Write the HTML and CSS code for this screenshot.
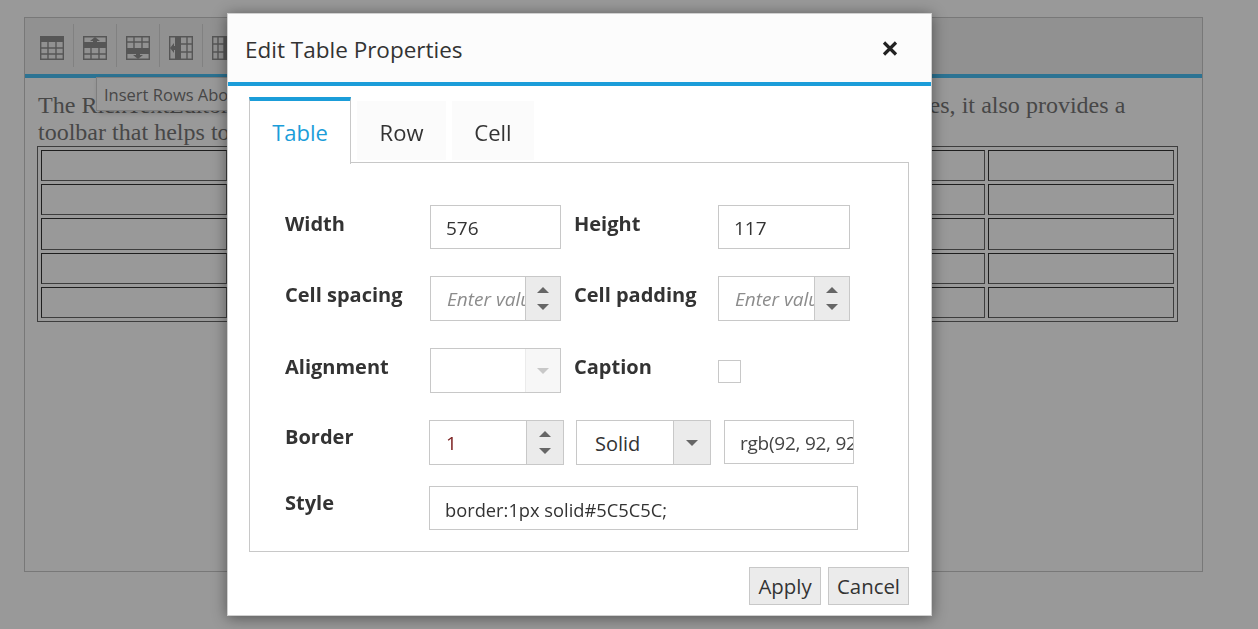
FILE: index.html
```html
<!doctype html>
<html lang="en">
  <head>
    <meta charset="UTF-8" />
    <meta name="viewport" content="width=device-width, initial-scale=1.0" />
    <title>Edit Table Properties</title>
    <link rel="stylesheet" href="styles.css">
  </head>
  <body>
    <div class="editor">
      <div class="toolbar">
        <div class="tool">
          <svg class="icon" viewBox="0 0 24 24"><path d="M.7.7h22.600v22.600H.7zM8 6v18M16 6v18M0 12h24M0 18h24" fill="none" stroke="currentColor" stroke-width="1.400"/><rect width="24" height="6" fill="currentColor"/></svg>
        </div>
        <div class="tool">
          <svg class="icon" viewBox="0 0 24 24"><path d="M.7.7h22.600v22.600H.7zM8 12v12M16 12v12M0 18h24" fill="none" stroke="currentColor" stroke-width="1.400"/><rect y="6" width="24" height="6" fill="currentColor"/><path d="M12 1l5 4h-3v2h-4V5H7z" fill="currentColor"/></svg>
        </div>
        <div class="tool">
          <svg class="icon" viewBox="0 0 24 24"><path d="M.7.7h22.600v22.600H.7zM8 0v12M16 0v12M0 6h24" fill="none" stroke="currentColor" stroke-width="1.400"/><rect y="12" width="24" height="6" fill="currentColor"/><path d="M12 23l5-4h-3v-2h-4v2H7z" fill="currentColor"/></svg>
        </div>
        <div class="tool">
          <svg class="icon" viewBox="0 0 24 24"><path d="M.7.7h22.600v22.600H.7zM18 0v24M12 8h12M12 16h12" fill="none" stroke="currentColor" stroke-width="1.400"/><rect x="6" width="6" height="24" fill="currentColor"/><path d="M1 12l4-5v3h3v4H5v3z" fill="currentColor"/></svg>
        </div>
        <div class="tool">
          <svg class="icon" viewBox="0 0 24 24"><path d="M.7.7h22.600v22.600H.7zM6 0v24M12 0v24M0 8h12M0 16h12" fill="none" stroke="currentColor" stroke-width="1.400"/><rect x="12" width="6" height="24" fill="currentColor"/></svg>
        </div>
      </div>
      <div class="tooltip">Insert Rows Above</div>
      <div class="content">
        <p class="intro">The RichTextEditor control is a WYSIWYG editor for entering content with tables and images, it also provides a toolbar that helps to apply rich formats to the content entered in the editor.</p>
        <table class="grid-table" border="1">
          <tr><td></td><td></td><td></td><td></td><td></td><td></td></tr>
          <tr><td></td><td></td><td></td><td></td><td></td><td></td></tr>
          <tr><td></td><td></td><td></td><td></td><td></td><td></td></tr>
          <tr><td></td><td></td><td></td><td></td><td></td><td></td></tr>
          <tr><td></td><td></td><td></td><td></td><td></td><td></td></tr>
        </table>
      </div>
    </div>

    <div class="overlay"></div>

    <div class="dialog">
      <div class="dialog-head">
        <h1 class="dialog-title">Edit Table Properties</h1>
        <svg class="close" viewBox="0 0 16 15"><path d="M2 1.500l12 12M14 1.500l-12 12" fill="none" stroke="currentColor" stroke-width="3.200"/></svg>
      </div>
      <div class="dialog-body">
        <div class="tabs">
          <div class="tab tab-active">Table</div>
          <div class="tab tab-row">Row</div>
          <div class="tab tab-cell">Cell</div>
        </div>
        <div class="panel">
          <div class="props">
            <label class="prop-label">Width</label>
            <input class="field" type="text" value="576" />
            <label class="prop-label prop-label-second">Height</label>
            <input class="field" type="text" value="117" />

            <label class="prop-label">Cell spacing</label>
            <div class="field combo">
              <input class="combo-input" type="text" placeholder="Enter value" />
              <div class="spin"><span class="arrow-up"></span><span class="arrow-down"></span></div>
            </div>
            <label class="prop-label prop-label-second">Cell padding</label>
            <div class="field combo">
              <input class="combo-input" type="text" placeholder="Enter value" />
              <div class="spin"><span class="arrow-up"></span><span class="arrow-down"></span></div>
            </div>

            <label class="prop-label">Alignment</label>
            <div class="field combo">
              <span class="combo-text"></span>
              <div class="spin spin-off"><span class="arrow-down"></span></div>
            </div>
            <label class="prop-label prop-label-second">Caption</label>
            <div class="caption-cell"><input class="check" type="checkbox" /></div>
          </div>

          <div class="border-row">
            <label class="prop-label">Border</label>
            <div class="field combo border-width">
              <input class="combo-input" type="text" value="1" />
              <div class="spin"><span class="arrow-up"></span><span class="arrow-down"></span></div>
            </div>
            <div class="field combo border-style">
              <span class="combo-text">Solid</span>
              <div class="spin"><span class="arrow-down"></span></div>
            </div>
            <input class="field border-color" type="text" value="rgb(92, 92, 92)" />
          </div>

          <div class="style-row">
            <label class="prop-label">Style</label>
            <input class="field style-input" type="text" value="border:1px solid#5C5C5C;" />
          </div>
        </div>
        <div class="dialog-foot">
          <button class="btn btn-apply" type="button">Apply</button>
          <button class="btn btn-cancel" type="button">Cancel</button>
        </div>
      </div>
    </div>
  </body>
</html>
```

FILE: styles.css
```css
html,
body {
  height: 100%;
}
body {
  margin: 0;
  padding: 17px 55px 0 24px;
  box-sizing: border-box;
  overflow: hidden;
  background: #fff;
  font-family: "Open Sans", "Noto Sans", sans-serif;
  color: #333;
}

/* editor behind the dialog */
.editor {
  position: relative;
  box-sizing: border-box;
  width: 1179px;
  height: 555px;
  border: 1px solid #c8c8c8;
}
.toolbar {
  display: flex;
  box-sizing: border-box;
  height: 60px;
  padding: 6px 0 0 6px;
  background: #f2f2f2;
  border-bottom: 4px solid #4ac0f5;
}
.tool {
  box-sizing: border-box;
  width: 43px;
  height: 43px;
  padding: 12px 9px 0;
  border-right: 1px solid #d8d8d8;
  color: #909090;
}
.tool .icon {
  display: block;
  width: 24px;
  height: 24px;
}
.tooltip {
  position: absolute;
  left: 71px;
  top: 59px;
  width: 180px;
  height: 34px;
  box-sizing: border-box;
  padding: 5px 7px;
  background: #fff;
  border: 1px solid #d2d2d2;
  box-shadow: 2px 2px 5px rgba(0, 0, 0, 0.2);
  color: #777;
  font-size: 16.500px;
  line-height: 24px;
  white-space: nowrap;
}
.content {
  padding: 14px 12px 0 12px;
}
.intro {
  margin: 0;
  padding-left: 1px;
  font-family: "Liberation Serif", serif;
  font-size: 24px;
  line-height: 27px;
  word-spacing: 0.100px;
  color: #777;
}
.grid-table {
  width: 1141px;
  height: 176px;
  box-sizing: border-box;
  border-collapse: separate;
  border-spacing: 3px;
  border: 1px solid #666;
  table-layout: fixed;
}
.grid-table td {
  border: 1px solid;
  border-color: #333 #666 #666 #333;
  padding: 0;
}

.overlay {
  position: fixed;
  left: 0;
  top: 0;
  right: 0;
  bottom: 0;
  background: rgba(0, 0, 0, 0.4);
}

/* dialog */
.dialog {
  position: absolute;
  left: 227px;
  top: 13px;
  box-sizing: border-box;
  width: 705px;
  height: 603px;
  background: #fff;
  border: 1px solid #d0d0d0;
  box-shadow: 0 2px 14px rgba(0, 0, 0, 0.45);
}
.dialog-head {
  display: flex;
  align-items: center;
  justify-content: space-between;
  box-sizing: border-box;
  height: 72px;
  padding: 0 33px 0 17px;
  background: #fcfcfc;
  border-bottom: 4px solid #1b9dd9;
}
.dialog-title {
  margin: 0;
  padding-top: 3px;
  font-size: 22.500px;
  font-weight: 400;
}
.close {
  width: 16px;
  height: 15px;
  color: #222;
}
.dialog-body {
  padding: 11px 22px 0 21px;
}
.tabs {
  display: flex;
  height: 66px;
  margin-bottom: -1px;
  font-size: 22px;
}
.tab {
  display: flex;
  align-items: center;
  justify-content: center;
  box-sizing: border-box;
  height: 59px;
  margin: 4px 6px 0 0;
  padding-top: 3px;
  background: #fbfbfb;
}
.tab-active {
  position: relative;
  width: 102px;
  height: 67px;
  margin-top: 0;
  padding: 0 0 2px;
  background: #fff;
  border: 1px solid #c8c8c8;
  border-top: 4px solid #1b9dd9;
  border-bottom: 0;
  color: #1b9dd9;
}
.tab-row {
  width: 89px;
}
.tab-cell {
  width: 82px;
}
.panel {
  box-sizing: border-box;
  height: 390px;
  padding: 42px 0 0 35px;
  border: 1px solid #c8c8c8;
}
.props {
  display: grid;
  grid-template-columns: 145px 131px 157px 132px;
  grid-template-rows: 44px 45px 45px;
  row-gap: 27px;
}
.prop-label {
  font-size: 20px;
  font-weight: 700;
  line-height: 38px;
  white-space: nowrap;
}
.prop-label-second {
  padding-left: 13px;
}
.field {
  box-sizing: border-box;
  width: 100%;
  height: 100%;
  margin: 0;
  padding: 2px 15px 0;
  background: #fff;
  border: 1px solid #c8c8c8;
  border-radius: 0;
  outline: none;
  color: #333;
  font-family: inherit;
  font-size: 19px;
}
.combo {
  display: flex;
  padding: 0;
}
.combo-input {
  flex: 1;
  min-width: 0;
  margin: 0;
  padding: 1px 0 0 16px;
  border: 0;
  outline: none;
  background: transparent;
  color: #7b2020;
  font-family: inherit;
  font-size: 19px;
}
.combo-input::placeholder {
  color: #8c8c8c;
  font-style: italic;
  opacity: 1;
}
.combo-text {
  flex: 1;
  padding-left: 18px;
  font-size: 20px;
  line-height: 46px;
}
.spin {
  display: flex;
  flex-direction: column;
  align-items: center;
  justify-content: space-around;
  flex: 0 0 35px;
  padding: 4px 0;
  box-sizing: border-box;
  background: #ebebeb;
  border-left: 1px solid #c8c8c8;
}
.spin-off {
  background: #f7f7f7;
  border-left-color: #ebebeb;
  justify-content: center;
}
.spin-off .arrow-down {
  border-top-color: #c8c8c8;
}
.arrow-up,
.arrow-down {
  width: 0;
  height: 0;
  border-left: 6px solid transparent;
  border-right: 6px solid transparent;
}
.arrow-up {
  border-bottom: 6px solid #666;
}
.arrow-down {
  border-top: 6px solid #666;
}
.caption-cell {
  padding-top: 12px;
}
.check {
  display: block;
  appearance: none;
  width: 23px;
  height: 23px;
  margin: 0;
  background: #fff;
  border: 1px solid #c8c8c8;
}
.border-row {
  display: flex;
  height: 45px;
  margin-top: 27px;
}
.border-row .prop-label {
  flex: 0 0 144px;
  line-height: 34px;
}
.border-width {
  flex: 0 0 135px;
  width: 135px;
}
.border-width .spin {
  flex-basis: 37px;
}
.border-style {
  flex: 0 0 135px;
  width: 135px;
  margin-left: 12px;
}
.border-style .spin {
  flex-basis: 37px;
}
.border-color {
  flex: 0 0 130px;
  width: 130px;
  height: 44px;
  margin-left: 13px;
  padding-right: 0;
  color: #444;
  letter-spacing: -0.250px;
}
.style-row {
  display: flex;
  height: 44px;
  margin-top: 21px;
}
.style-row .prop-label {
  flex: 0 0 144px;
  line-height: 34px;
}
.style-input {
  flex: 0 0 429px;
  width: 429px;
  padding-top: 3px;
  font-size: 18.300px;
}
.dialog-foot {
  display: flex;
  justify-content: flex-end;
  gap: 7px;
  padding-top: 15px;
}
.btn {
  box-sizing: border-box;
  height: 38px;
  margin: 0;
  padding: 0;
  background: #ebebeb;
  border: 1px solid #c8c8c8;
  color: #333;
  font-family: inherit;
  font-size: 20.400px;
}
.btn-apply {
  width: 72px;
}
.btn-cancel {
  width: 81px;
}
```
